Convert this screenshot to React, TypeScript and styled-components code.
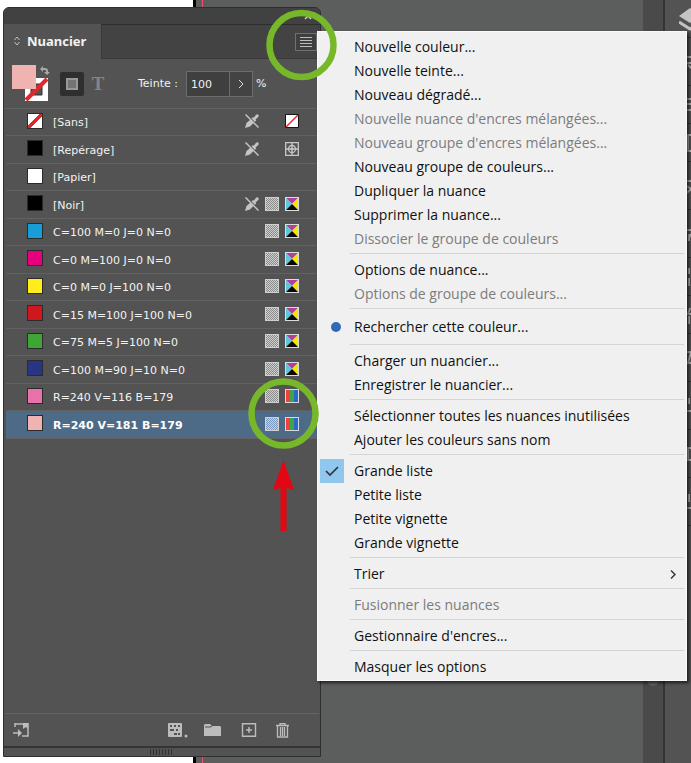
import React from "react";
import styled, { createGlobalStyle, css } from "styled-components";

const GlobalStyle = createGlobalStyle`
  *, *::before, *::after { box-sizing: border-box; }
  body { margin: 0; overflow: hidden; }
  button, input { font: inherit; color: inherit; }
  button { border: 0; padding: 0; background: none; }
  ul { list-style: none; margin: 0; padding: 0; }
  svg { display: block; flex: none; }
`;

const Workspace = styled.main`
  position: relative;
  display: flex;
  height: 100vh;
  overflow: hidden;
  background: #5c5e5d;
  font-family: "DejaVu Sans", sans-serif;
`;

const Page = styled.div`
  flex: none;
  width: 196px;
  border-right: 3px solid #000;
  background: #fff;
`;

const Pasteboard = styled.div`
  flex: 1;
  padding-left: 6px;
`;

const BleedLine = styled.div`
  width: 1px;
  height: 100%;
  background: #ee5070;
`;

const ScrollTrack = styled.div`
  flex: none;
  width: 20px;
  padding: 80px 4px 0;
  background: #4a4a4a;
`;

const ScrollThumb = styled.div`
  height: 606px;
  border-radius: 6px;
  background: #626262;
`;

const Dock = styled.nav`
  flex: none;
  width: 28px;
  overflow: hidden;
  border-left: 2px solid #343434;
  background: #535353;
`;

const DockButton = styled.button<{ $tall?: boolean }>`
  display: flex;
  justify-content: flex-end;
  align-items: center;
  width: 100%;
  height: ${(p) => (p.$tall ? "48px" : "38px")};
  border-bottom: 1px solid #383838;
  color: #b4b4b4;
`;

const Panel = styled.section`
  position: absolute;
  left: 3px;
  top: 7px;
  bottom: 6px;
  width: 318px;
  display: flex;
  flex-direction: column;
  border: 1px solid #2f2f2f;
  border-radius: 6px 6px 0 0;
  background: #535353;
  color: #f2f2f2;
  font-size: 11px;
  line-height: 16px;
`;

const TitleBar = styled.header`
  display: flex;
  justify-content: flex-end;
  align-items: center;
  height: 16px;
  padding-right: 6px;
  border-radius: 5px 5px 0 0;
  background: #414141;
  color: #d0d0d0;
`;

const TabBar = styled.div`
  display: flex;
  justify-content: space-between;
  align-items: center;
  height: 35px;
  border-top: 1px solid #2d2d2d;
  border-bottom: 1px solid #3a3a3a;
  background: #434343;
`;

const Tab = styled.button`
  display: flex;
  align-items: center;
  gap: 7px;
  height: 35px;
  width: 98px;
  padding: 0 0 2px 10px;
  border-right: 1px solid #383838;
  background: #535353;
  font-family: "Noto Sans", sans-serif;
  font-size: 13px;
  font-weight: 700;
`;

const MenuButton = styled.button`
  display: grid;
  place-items: center;
  width: 22px;
  height: 18px;
  margin-right: 3px;
  border: 1px solid #707070;
  background: #3f3f3f;
`;

const Controls = styled.div`
  display: flex;
  align-items: center;
  height: 49px;
  padding-left: 8px;
`;

const ColorWell = styled.button`
  width: 40px;
  height: 40px;
`;

const TargetButton = styled.button<{ $active?: boolean }>`
  display: grid;
  place-items: center;
  width: 24px;
  height: 24px;
  margin-left: ${(p) => (p.$active ? "8px" : "2px")};
  border-radius: 2px;
  background: ${(p) => (p.$active ? "#2f2f2f" : "transparent")};
  color: #858585;
  font: 700 19px/24px "Liberation Serif", serif;
`;

const TintLabel = styled.label`
  display: flex;
  align-items: center;
  gap: 8px;
  margin-left: 28px;
  padding-top: 1px;
`;

const TintInput = styled.input`
  width: 44px;
  height: 26px;
  padding: 0 4px;
  border: 1px solid #6c6c6c;
  outline: 0;
  background: #3f3f3f;
`;

const TintStep = styled.button`
  display: grid;
  place-items: center;
  width: 23px;
  height: 26px;
  margin-right: 3px;
  border: 1px solid #6c6c6c;
  border-left: 0;
  background: #434343;
`;

const SwatchList = styled.ul`
  flex: 1;
  padding: 0 0 0 2px;
  border-top: 1px solid #616161;
`;

const SwatchItem = styled.li`
  height: 27px;
  &:nth-child(even) { height: 28px; }
`;

const SwatchRow = styled.button<{ $selected?: boolean }>`
  display: flex;
  align-items: center;
  width: 100%;
  height: 100%;
  padding: 0 21px 0 21px;
  border-bottom: 1px solid #616161;
  text-align: left;
  ${(p) => p.$selected && css`
    background: #4d6a87;
    color: #fff;
    font-weight: 700;
  `}
`;

const Chip = styled.span<{ $color: string }>`
  flex: none;
  width: 16px;
  height: 16px;
  margin: 0 10px 3px 0;
  border: 1px solid #2b2b2b;
  background: ${(p) => p.$color};
`;

const SwatchName = styled.span`
  flex: 1;
  padding-top: 2px;
`;

const RowIcons = styled.span`
  display: flex;
  gap: 6px;
  padding-bottom: 2px;
`;

const Footer = styled.footer`
  display: flex;
  align-items: center;
  height: 33px;
  margin: 0 1px;
  padding: 0 30px 0 8px;
  border-top: 1px solid #636363;
  color: #bcbcbc;
`;

const FooterTools = styled.div`
  display: flex;
  align-items: center;
  gap: 16px;
  margin-left: auto;
`;

const FooterButton = styled.button`
  display: grid;
  place-items: center;
  height: 20px;
`;

const Grip = styled.div`
  display: grid;
  place-items: center;
  height: 10px;
  border-top: 2px solid #343434;
`;

const Menu = styled.div`
  position: absolute;
  left: 317px;
  right: 4px;
  top: 31px;
  padding: 3px 2px 1px;
  border: 1px solid #fafafa;
  background: #f0f0f0;
  box-shadow: 2px 2px 3px rgba(0, 0, 0, 0.65);
  color: #111;
  font-family: "Open Sans", sans-serif;
  font-size: 14px;
  line-height: 24px;
`;

const MenuItem = styled.button<{ $tall?: boolean }>`
  display: grid;
  grid-template-columns: 24px 1fr auto;
  column-gap: 10px;
  align-items: center;
  width: 100%;
  height: ${(p) => (p.$tall ? "29px" : "24px")};
  padding: ${(p) => (p.$tall ? "0 8px 2px 0" : "0 8px 0 0")};
  text-align: left;
  white-space: nowrap;
  &:disabled { color: #7c7c7c; }
`;

const Mark = styled.span<{ $checked?: boolean }>`
  display: grid;
  place-items: center;
  height: 24px;
  background: ${(p) => (p.$checked ? "#91c6ee" : "transparent")};
`;

const Rule = styled.hr`
  height: 1px;
  margin: 2px 0 4px 30px;
  border: 0;
  background: #d4d4d4;
`;

const Ring = styled.svg<{ $x: number; $y: number }>`
  position: absolute;
  left: ${(p) => p.$x}px;
  top: ${(p) => p.$y}px;
  pointer-events: none;
`;

const NoEdit = () => (
  <svg width="14" height="14" viewBox="0 0 14 14">
    <path d="M0 14l1.500-5 4-3.500 3.500 3-4 4z" fill="#c4c4c4" />
    <path d="M6.500 4.500l1.500-1.500.8.8L11 .8q2-1.300 2.500.2t-.5 2.300L10.500 5.500l.8.8L9.800 8z" fill="#c4c4c4" />
    <path d="M1 0l13 13" stroke="#535353" strokeWidth="1.200" />
    <path d="M.5.5l13 13" stroke="#c4c4c4" strokeWidth="1.500" />
  </svg>
);

const NoneIcon = () => (
  <svg width="14" height="14" viewBox="0 0 14 14">
    <path d="M.5.5h13v13H.5z" fill="#fff" stroke="#151515" />
    <path d="M1 13L13 1" stroke="#e22a30" strokeWidth="1.400" />
  </svg>
);

const RegistrationIcon = () => (
  <svg width="14" height="14" viewBox="0 0 14 14" fill="none" stroke="#c8c8c8">
    <path d="M.7.7h12.600v12.600H.7zM7 1v12M1 7h12" strokeWidth="1.300" />
    <circle cx="7" cy="7" r="3.500" strokeWidth="1.300" />
    <circle cx="7" cy="7" r="1" />
  </svg>
);

const ProcessIcon = ({ dark = "#8a8a8a" }: { dark?: string }) => (
  <svg width="14" height="14" viewBox="0 0 14 14">
    <path d="M0 0h14v14H0z" fill="#cfcfcf" />
    {Array.from({ length: 6 }, (_, r) => (
      <path key={r} d={`M1 ${r * 2 + 1.500}h12`} stroke={dark} strokeDasharray="1 1" />
    ))}
    {Array.from({ length: 6 }, (_, r) => (
      <path key={`b${r}`} d={`M2 ${r * 2 + 2.500}h11`} stroke={dark} strokeDasharray="1 1" />
    ))}
    <path d="M.5.5h13v13H.5z" fill="none" stroke="#cfcfcf" />
  </svg>
);

const CmykIcon = () => (
  <svg width="14" height="14" viewBox="0 0 14 14">
    <path d="M0 0h14v14H0z" fill="#dcdcdc" />
    <path d="M1 1h12L7 7z" fill="#b040a0" />
    <path d="M13 1v12L7 7z" fill="#f5e600" />
    <path d="M1 1v12l6-6z" fill="#5cc6de" />
    <path d="M1 13h12L7 7z" fill="#080808" />
  </svg>
);

const RgbIcon = () => (
  <svg width="14" height="14" viewBox="0 0 14 14">
    <path d="M0 0h14v14H0z" fill="#d4d9df" />
    <path d="M1 1h4v12H1z" fill="#f04040" />
    <path d="M5 1h4v12H5z" fill="#3da447" />
    <path d="M9 1h4v12H9z" fill="#2c68c8" />
  </svg>
);

type Kind = "none" | "registration" | "paper" | "black" | "cmyk" | "rgb";

const swatches: { name: string; color: string; kind: Kind; selected?: boolean }[] = [
  { name: "[Sans]", color: "linear-gradient(135deg, #fff 42%, #e4252b 42%, #e4252b 58%, #fff 58%)", kind: "none" },
  { name: "[Repérage]", color: "#000", kind: "registration" },
  { name: "[Papier]", color: "#fff", kind: "paper" },
  { name: "[Noir]", color: "#000", kind: "black" },
  { name: "C=100 M=0 J=0 N=0", color: "#199dd9", kind: "cmyk" },
  { name: "C=0 M=100 J=0 N=0", color: "#e6007e", kind: "cmyk" },
  { name: "C=0 M=0 J=100 N=0", color: "#ffed1c", kind: "cmyk" },
  { name: "C=15 M=100 J=100 N=0", color: "#cf171d", kind: "cmyk" },
  { name: "C=75 M=5 J=100 N=0", color: "#3fa535", kind: "cmyk" },
  { name: "C=100 M=90 J=10 N=0", color: "#273583", kind: "cmyk" },
  { name: "R=240 V=116 B=179", color: "#e873aa", kind: "rgb" },
  { name: "R=240 V=181 B=179", color: "#efb4b2", kind: "rgb", selected: true },
];

const KindIcons = ({ kind, selected }: { kind: Kind; selected?: boolean }) => (
  <RowIcons>
    {kind === "none" && <><NoEdit /><svg width="14" height="14" /><NoneIcon /></>}
    {kind === "registration" && <><NoEdit /><svg width="14" height="14" /><RegistrationIcon /></>}
    {kind === "black" && <><NoEdit /><ProcessIcon /><CmykIcon /></>}
    {kind === "cmyk" && <><ProcessIcon /><CmykIcon /></>}
    {kind === "rgb" && <><ProcessIcon dark={selected ? "#7c9abf" : "#8a8a8a"} /><RgbIcon /></>}
  </RowIcons>
);

type Entry = { label: string; disabled?: boolean; dot?: boolean; checked?: boolean; submenu?: boolean };

const menuGroups: Entry[][] = [
  [
    { label: "Nouvelle couleur..." },
    { label: "Nouvelle teinte..." },
    { label: "Nouveau dégradé..." },
    { label: "Nouvelle nuance d'encres mélangées...", disabled: true },
    { label: "Nouveau groupe d'encres mélangées...", disabled: true },
    { label: "Nouveau groupe de couleurs..." },
    { label: "Dupliquer la nuance" },
    { label: "Supprimer la nuance..." },
    { label: "Dissocier le groupe de couleurs", disabled: true },
  ],
  [{ label: "Options de nuance..." }, { label: "Options de groupe de couleurs...", disabled: true }],
  [{ label: "Rechercher cette couleur...", dot: true }],
  [{ label: "Charger un nuancier..." }, { label: "Enregistrer le nuancier..." }],
  [{ label: "Sélectionner toutes les nuances inutilisées" }, { label: "Ajouter les couleurs sans nom" }],
  [
    { label: "Grande liste", checked: true },
    { label: "Petite liste" },
    { label: "Petite vignette" },
    { label: "Grande vignette" },
  ],
  [{ label: "Trier", submenu: true }],
  [{ label: "Fusionner les nuances", disabled: true }],
  [{ label: "Gestionnaire d'encres..." }],
  [{ label: "Masquer les options" }],
];

const DockGlyph = ({ d }: { d: string }) => (
  <svg width="4" height="18" viewBox="0 0 4 18" fill="none" stroke="currentColor" strokeWidth="2">
    <path d={d} />
  </svg>
);

const dockGlyphs: { d: string; tall?: boolean }[] = [
  { d: "M0 4h4M0 10h4M1 12l3 3", tall: true },
  { d: "M0 3h4M0 8h4M0 14h4" },
  { d: "M4 1H1v16h3" },
  { d: "M0 4h4M0 9l4 3M4 12l-4 4", tall: true },
  { d: "M0 5h4M2 9v7M4 9l-2 4", tall: true },
  { d: "M2 0v6M2 10v8" },
  { d: "M3 2L1 8h3M2 10v8" },
  { d: "M0 3h4L1 14h3", tall: true },
  { d: "M2 1v6M0 14h4", tall: true },
  { d: "M4 3H1v12h3", tall: true },
  { d: "M2 1v8M0 15h4", tall: true },
];

export default function App() {
  return (
    <Workspace>
      <GlobalStyle />
      <Page />
      <Pasteboard><BleedLine /></Pasteboard>
      <ScrollTrack><ScrollThumb /></ScrollTrack>
      <Dock aria-label="Panneaux">
        <DockButton aria-label="Calques">
          <svg width="12" height="24" viewBox="0 0 12 24">
            <path d="M0 9L11 1l11 8-11 7z" fill="#c4c4c4" />
            <path d="M0 15l11 7 11-7" fill="none" stroke="#c4c4c4" strokeWidth="3" />
          </svg>
        </DockButton>
        {dockGlyphs.map((g, i) => (
          <DockButton key={i} $tall={g.tall} aria-label={`Panneau ${i + 1}`}><DockGlyph d={g.d} /></DockButton>
        ))}
      </Dock>

      <Panel aria-label="Nuancier">
        <TitleBar>
          <button aria-label="Fermer">
            <svg width="10" height="8" viewBox="0 0 10 8" fill="none" stroke="currentColor" strokeWidth="1.500">
              <path d="M1 1l6 6M7 1L1 7" />
            </svg>
          </button>
        </TitleBar>
        <TabBar>
          <Tab>
            <svg width="6" height="10" viewBox="0 0 6 10" fill="none" stroke="#c4c4c4">
              <path d="M.5 4L3 1l2.500 3M.5 6L3 9l2.500-3" />
            </svg>
            Nuancier
          </Tab>
          <MenuButton aria-label="Menu du panneau">
            <svg width="12" height="10" viewBox="0 0 12 10" stroke="#bdbdbd">
              <path d="M0 .5h12M0 3.500h12M0 6.500h12M0 9.500h12" />
            </svg>
          </MenuButton>
        </TabBar>
        <Controls>
          <ColorWell aria-label="Fond et contour">
            <svg width="40" height="40" viewBox="0 0 40 40">
              <path d="M13 14h23v23H13z" fill="#fff" />
              <path d="M19 20h11v11H19z" fill="#535353" stroke="#333" />
              <path d="M14 36L35 15" stroke="#e4252b" strokeWidth="4" />
              <path d="M0 1h24v24H0z" fill="#efb4b2" />
              <path d="M30 5h3q2 0 2 2v2" fill="none" stroke="#a8a8a8" strokeWidth="2" />
              <path d="M31 2v6l-3-3zM32 8h6l-3 3z" fill="#a8a8a8" />
            </svg>
          </ColorWell>
          <TargetButton $active aria-label="Appliquer au conteneur">
            <svg width="12" height="12" viewBox="0 0 12 12">
              <path d="M1 1h10v10H1z" fill="#747474" stroke="#989898" strokeWidth="2" />
            </svg>
          </TargetButton>
          <TargetButton aria-label="Appliquer au texte">T</TargetButton>
          <TintLabel>
            Teinte :
            <TintInput defaultValue="100" />
          </TintLabel>
          <TintStep aria-label="Choisir la teinte">
            <svg width="6" height="10" viewBox="0 0 6 10" fill="none" stroke="#e0e0e0"><path d="M1 1l4 4-4 4" /></svg>
          </TintStep>
          %
        </Controls>
        <SwatchList>
          {swatches.map((s) => (
            <SwatchItem key={s.name}>
              <SwatchRow $selected={s.selected} aria-pressed={!!s.selected}>
                <Chip $color={s.color} />
                <SwatchName>{s.name}</SwatchName>
                <KindIcons kind={s.kind} selected={s.selected} />
              </SwatchRow>
            </SwatchItem>
          ))}
        </SwatchList>
        <Footer>
          <FooterButton aria-label="Ajouter à la bibliothèque">
            <svg width="18" height="16" viewBox="0 0 18 16" fill="none" stroke="currentColor" strokeWidth="1.500">
              <path d="M2 5V1M2 2h9M15 1v13H9" />
              <path d="M10 1h5v6l-2-2-3 2z" fill="currentColor" stroke="none" />
              <path d="M0 11h6" /><path d="M5 7l4 4-4 4z" fill="currentColor" stroke="none" />
            </svg>
          </FooterButton>
          <FooterTools>
            <FooterButton aria-label="Afficher les nuances">
              <svg width="20" height="15" viewBox="0 0 20 15">
                <rect width="14" height="14" rx="1" fill="currentColor" />
                <path d="M2 2h2v2H2zM6 2h2v2H6zM10 2h2v2h-2zM2 6h4v2H2zM8 6h2v2H8zM6 10h3v2H6zM10 10h2v2h-2z" fill="#535353" />
                <circle cx="18" cy="13" r="1.500" fill="currentColor" />
              </svg>
            </FooterButton>
            <FooterButton aria-label="Nouveau groupe de couleurs">
              <svg width="18" height="14" viewBox="0 0 18 14"><path d="M0 2l1-1h5l2 2h8l1 1v9H0z" fill="currentColor" /><path d="M1 4h6l1-1" fill="none" stroke="#535353" /></svg>
            </FooterButton>
            <FooterButton aria-label="Nouvelle nuance">
              <svg width="22" height="14" viewBox="0 0 22 14" fill="none" stroke="currentColor">
                <path d="M4.500.7h13v12.600h-13z" strokeWidth="1.400" /><path d="M11 4v6M8 7h6" strokeWidth="1.500" />
              </svg>
            </FooterButton>
            <FooterButton aria-label="Supprimer">
              <svg width="13" height="15" viewBox="0 0 13 15" fill="none" stroke="currentColor" strokeWidth="1.300">
                <path d="M0 2.500h13M4 2V.7h5V2M1.500 3v11h10V3M4.500 4v9M6.500 4v9M8.500 4v9" />
              </svg>
            </FooterButton>
          </FooterTools>
        </Footer>
        <Grip>
          <svg width="24" height="6" viewBox="0 0 24 6" stroke="#303030">
            <path d="M.5 0v6M3.500 0v6M6.500 0v6M9.500 0v6M12.500 0v6M15.500 0v6M18.500 0v6M21.500 0v6" />
          </svg>
        </Grip>
      </Panel>

      <Menu role="menu">
        {menuGroups.map((group, gi) => (
          <React.Fragment key={gi}>
            {gi > 0 && <Rule />}
            {group.map((e) => (
              <MenuItem key={e.label} role="menuitem" disabled={e.disabled} $tall={e.dot}>
                <Mark $checked={e.checked}>
                  {e.dot && <svg width="24" height="10" viewBox="0 0 24 10"><circle cx="16" cy="5" r="5" fill="#2f69b8" /></svg>}
                  {e.checked && (
                    <svg width="14" height="10" viewBox="0 0 14 10" fill="none" stroke="#333" strokeWidth="1.700"><path d="M1 5l4 4 8-8" /></svg>
                  )}
                </Mark>
                <span>{e.label}</span>
                {e.submenu && <svg width="6" height="9" viewBox="0 0 6 9" fill="none" stroke="#333" strokeWidth="1.400"><path d="M1 .5l4 4-4 4" /></svg>}
              </MenuItem>
            ))}
          </React.Fragment>
        ))}
      </Menu>

      <Ring $x={266} $y={9} width="71" height="72" viewBox="0 0 71 72" fill="none">
        <circle cx="35.500" cy="36" r="32" stroke="#76b82a" strokeWidth="6.500" />
      </Ring>
      <Ring $x={248} $y={378} width="72" height="154" viewBox="0 0 72 154" fill="none">
        <circle cx="35.500" cy="35.500" r="32" stroke="#76b82a" strokeWidth="6.500" />
        <path d="M35.500 82l10.500 30-7.500-2v43h-6v-43l-7.500 2z" fill="#e30613" />
      </Ring>
    </Workspace>
  );
}
